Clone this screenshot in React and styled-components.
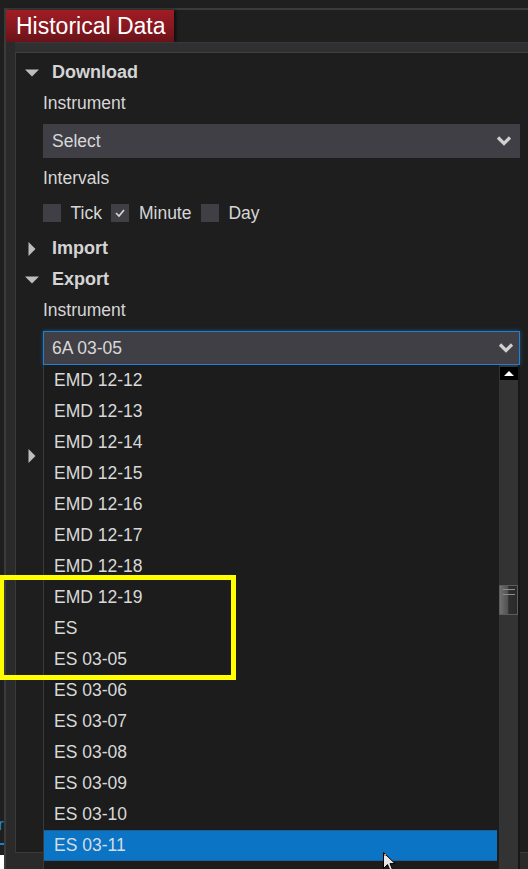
import React from "react";
import styled, { createGlobalStyle } from "styled-components";

const GlobalStyle = createGlobalStyle`
  html, body { margin: 0; padding: 0; background: #1f1f1f; }
  body { font-family: "Liberation Sans", Arial, sans-serif; }
  * { box-sizing: border-box; }
`;

const Page = styled.div`
  position: relative;
  width: 528px;
  height: 869px;
  overflow: hidden;
  display: flex;
  background: #1f1f1f;
`;

const LeftEdge = styled.div`
  width: 4px;
  display: flex;
  flex-direction: column;
  overflow: hidden;
`;
const EdgeFill = styled.div`
  flex: 1;
`;
const EdgeGlyph = styled.div`
  height: 20px;
  display: flex;
  justify-content: flex-end;
  color: #1b8be0;
  font-size: 17px;
  line-height: 20px;
  white-space: nowrap;
`;
const EdgeGap = styled.div`
  height: ${(p) => p.$h}px;
`;
const EdgeLine = styled.div`
  height: 2px;
  background: #1b7fd0;
`;
const EdgeWhite = styled.div`
  height: 14px;
  background: #ffffff;
`;

const Frame = styled.div`
  flex: 1;
  margin-top: 8px;
  border-top: 2px solid #3b3b3b;
  border-left: 2px solid #3b3b3b;
  display: flex;
  flex-direction: column;
  min-width: 0;
`;

const TabRow = styled.div`
  height: 32px;
  display: flex;
  background: #1f1f1f;
`;

const Tab = styled.div`
  width: 168px;
  height: 32px;
  padding-left: 10px;
  background: linear-gradient(180deg, #a11c24 0%, #861820 55%, #6a1219 100%);
  color: #ffffff;
  font-size: 23px;
  line-height: 32px;
  white-space: nowrap;
  box-shadow: 2px 0 3px rgba(0, 0, 0, 0.55);
`;

const Body = styled.div`
  flex: 1;
  background: #2a2a2a;
  padding-left: 9px;
  display: flex;
  flex-direction: column;
`;

const PanelCap = styled.div`
  height: 11px;
  background: #303033;
  border-top: 1px solid #383838;
  border-bottom: 1px solid #404040;
`;

const Panel = styled.div`
  position: relative;
  height: 800px;
  background: #1e1e1e;
  border-left: 1px solid #3a3a3a;
  border-bottom: 1px solid #3a3a3a;
  padding: 4px 8px 0 8px;
  display: flex;
  flex-direction: column;
`;

const Header = styled.div`
  height: 31px;
  margin-top: ${(p) => p.$mt || 0}px;
  display: flex;
  align-items: center;
  color: #d4d4d4;
  font-weight: bold;
  font-size: 18px;
`;

const Caret = styled.span`
  width: 16px;
  margin-right: 12px;
  display: flex;
  justify-content: center;
  align-items: center;
`;

const Label = styled.div`
  height: ${(p) => p.$h || 31}px;
  margin-top: ${(p) => p.$mt || 0}px;
  margin-left: 19px;
  line-height: ${(p) => p.$h || 31}px;
  color: #d6d6d6;
  font-size: 17.5px;
`;

const SelectBox = styled.div`
  height: 34px;
  margin: 5px 0 0 19px;
  background: #403f46;
  display: flex;
  align-items: center;
  justify-content: space-between;
  padding: 0 8px 0 9px;
  color: #d8d8d8;
  font-size: 17.5px;
`;

const CheckRow = styled.div`
  height: 40px;
  margin-left: 19px;
  display: flex;
  align-items: center;
  color: #d6d6d6;
  font-size: 17.5px;
`;

const Box = styled.span`
  width: 18px;
  height: 18px;
  background: #403f46;
  margin-right: 9.5px;
  display: flex;
  align-items: center;
  justify-content: center;
`;

const CheckText = styled.span`
  margin-right: 9.5px;
`;

const Dropdown = styled.div`
  position: relative;
  margin: 5px 0 0 19px;
  z-index: 5;
`;

const DropInput = styled.div`
  height: 34px;
  border: 1px solid #1f80d6;
  box-shadow: 0 0 4px rgba(31, 128, 214, 0.55);
  background: #403f46;
  display: flex;
  align-items: center;
  justify-content: space-between;
  padding: 0 5px 0 8px;
  color: #d8d8d8;
  font-size: 17.5px;
`;

const List = styled.div`
  position: absolute;
  top: 100%;
  left: 0;
  right: 0;
  height: 540px;
  background: #1c1c1c;
  border-left: 1px solid #3a3a3a;
  display: flex;
`;

const Items = styled.div`
  flex: 1;
  padding-right: 2px;
  overflow: hidden;
`;

const Item = styled.div`
  height: 31px;
  line-height: 31px;
  padding-left: 10px;
  font-size: 17.5px;
  color: ${(p) => (p.$active ? "#d4dde6" : "#d8d8d8")};
  background: ${(p) => (p.$active ? "#0b74c4" : "transparent")};
  box-shadow: ${(p) => (p.$active ? "inset 0 1px 0 #1d5f93, inset 0 -1px 0 #1d5f93" : "none")};
  white-space: nowrap;
`;

const Track = styled.div`
  width: 21px;
  background: #333333;
  border-right: 2px solid #171717;
  display: flex;
  flex-direction: column;
  align-items: center;
`;

const UpButton = styled.div`
  width: 18px;
  height: 13px;
  margin-top: 2px;
  background: #000000;
  display: flex;
  align-items: center;
  justify-content: center;
`;

const Thumb = styled.div`
  position: relative;
  width: 19px;
  height: 30px;
  margin-top: ${(p) => p.$offset}px;
  border: 1px solid #5c5c5c;
  background: linear-gradient(90deg, #707070 0%, #525252 45%, #2e2e2e 52%, #2a2a2a 100%);
  &::before, &::after {
    content: "";
    position: absolute;
    left: 3px;
    width: 12px;
    height: 1px;
    background: #8e8e8e;
  }
  &::before { top: 3px; }
  &::after { top: 8px; }
`;

const Highlight = styled.div`
  position: absolute;
  left: -1px;
  top: 575px;
  width: 237px;
  height: 105px;
  border: 5px solid #ffff00;
  pointer-events: none;
  z-index: 20;
`;

const Cursor = styled.svg`
  position: absolute;
  left: 383px;
  top: 852px;
  z-index: 30;
`;

const Chevron = () => (
  <svg width="16" height="12" viewBox="0 0 16 12">
    <polyline points="2,2.5 8,8.5 14,2.5" fill="none" stroke="#d0d0d0" strokeWidth="3.2" />
  </svg>
);

const Tri = ({ open }) =>
  open ? (
    <svg width="14" height="8" viewBox="0 0 14 8">
      <polygon points="0,0.5 14,0.5 7,7.5" fill="#bdbdbd" />
    </svg>
  ) : (
    <svg width="8" height="14" viewBox="0 0 8 14">
      <polygon points="0.5,0 7.5,7 0.5,14" fill="#bdbdbd" />
    </svg>
  );

const Check = () => (
  <svg width="12" height="10" viewBox="0 0 12 10">
    <polyline points="2,5 5,8 10,2" fill="none" stroke="#d8d8d8" strokeWidth="1.6" />
  </svg>
);

const items = [
  "EMD 12-12", "EMD 12-13", "EMD 12-14", "EMD 12-15", "EMD 12-16", "EMD 12-17",
  "EMD 12-18", "EMD 12-19", "ES", "ES 03-05", "ES 03-06", "ES 03-07", "ES 03-08",
  "ES 03-09", "ES 03-10", "ES 03-11",
];

const CheckGroup = ({ checked }) => (
  <CheckRow>
    {["Tick", "Minute", "Day"].map((t, i) => (
      <React.Fragment key={t}>
        <Box>{checked === i && <Check />}</Box>
        <CheckText>{t}</CheckText>
      </React.Fragment>
    ))}
  </CheckRow>
);

export default function App() {
  return (
    <>
      <GlobalStyle />
      <Page>
        <LeftEdge>
          <EdgeFill />
          <EdgeGlyph>r</EdgeGlyph>
          <EdgeGap $h={8} />
          <EdgeLine />
          <EdgeGap $h={10} />
          <EdgeWhite />
        </LeftEdge>
        <Frame>
          <TabRow>
            <Tab>Historical Data</Tab>
          </TabRow>
          <Body>
            <PanelCap />
            <Panel>
              <Header>
                <Caret><Tri open /></Caret>Download
              </Header>
              <Label>Instrument</Label>
              <SelectBox>
                <span>Select</span>
                <Chevron />
              </SelectBox>
              <Label $mt={5} $h={30}>Intervals</Label>
              <CheckGroup checked={1} />
              <Header>
                <Caret><Tri /></Caret>Import
              </Header>
              <Header>
                <Caret><Tri open /></Caret>Export
              </Header>
              <Label>Instrument</Label>
              <Dropdown>
                <DropInput>
                  <span>6A 03-05</span>
                  <Chevron />
                </DropInput>
                <List>
                  <Items>
                    {items.map((it) => (
                      <Item key={it} $active={it === "ES 03-11"}>{it}</Item>
                    ))}
                  </Items>
                  <Track>
                    <UpButton>
                      <svg width="10" height="5" viewBox="0 0 10 5">
                        <polygon points="0,5 10,5 5,0" fill="#ffffff" />
                      </svg>
                    </UpButton>
                    <Thumb $offset={205} />
                  </Track>
                </List>
              </Dropdown>
              <Header $mt={75}>
                <Caret><Tri /></Caret>
              </Header>
            </Panel>
          </Body>
        </Frame>
        <Highlight />
        <Cursor width="13" height="20" viewBox="0 0 13 20">
          <path d="M0.5 0.5 L0.5 16.5 L4.5 12.5 L7.2 18.8 L9.6 17.8 L7 11.6 L12 11.6 Z" fill="#e6e6e6" stroke="#000" strokeWidth="1" />
          <rect x="1" y="2" width="2" height="2" fill="#e8863a" />
        </Cursor>
      </Page>
    </>
  );
}
